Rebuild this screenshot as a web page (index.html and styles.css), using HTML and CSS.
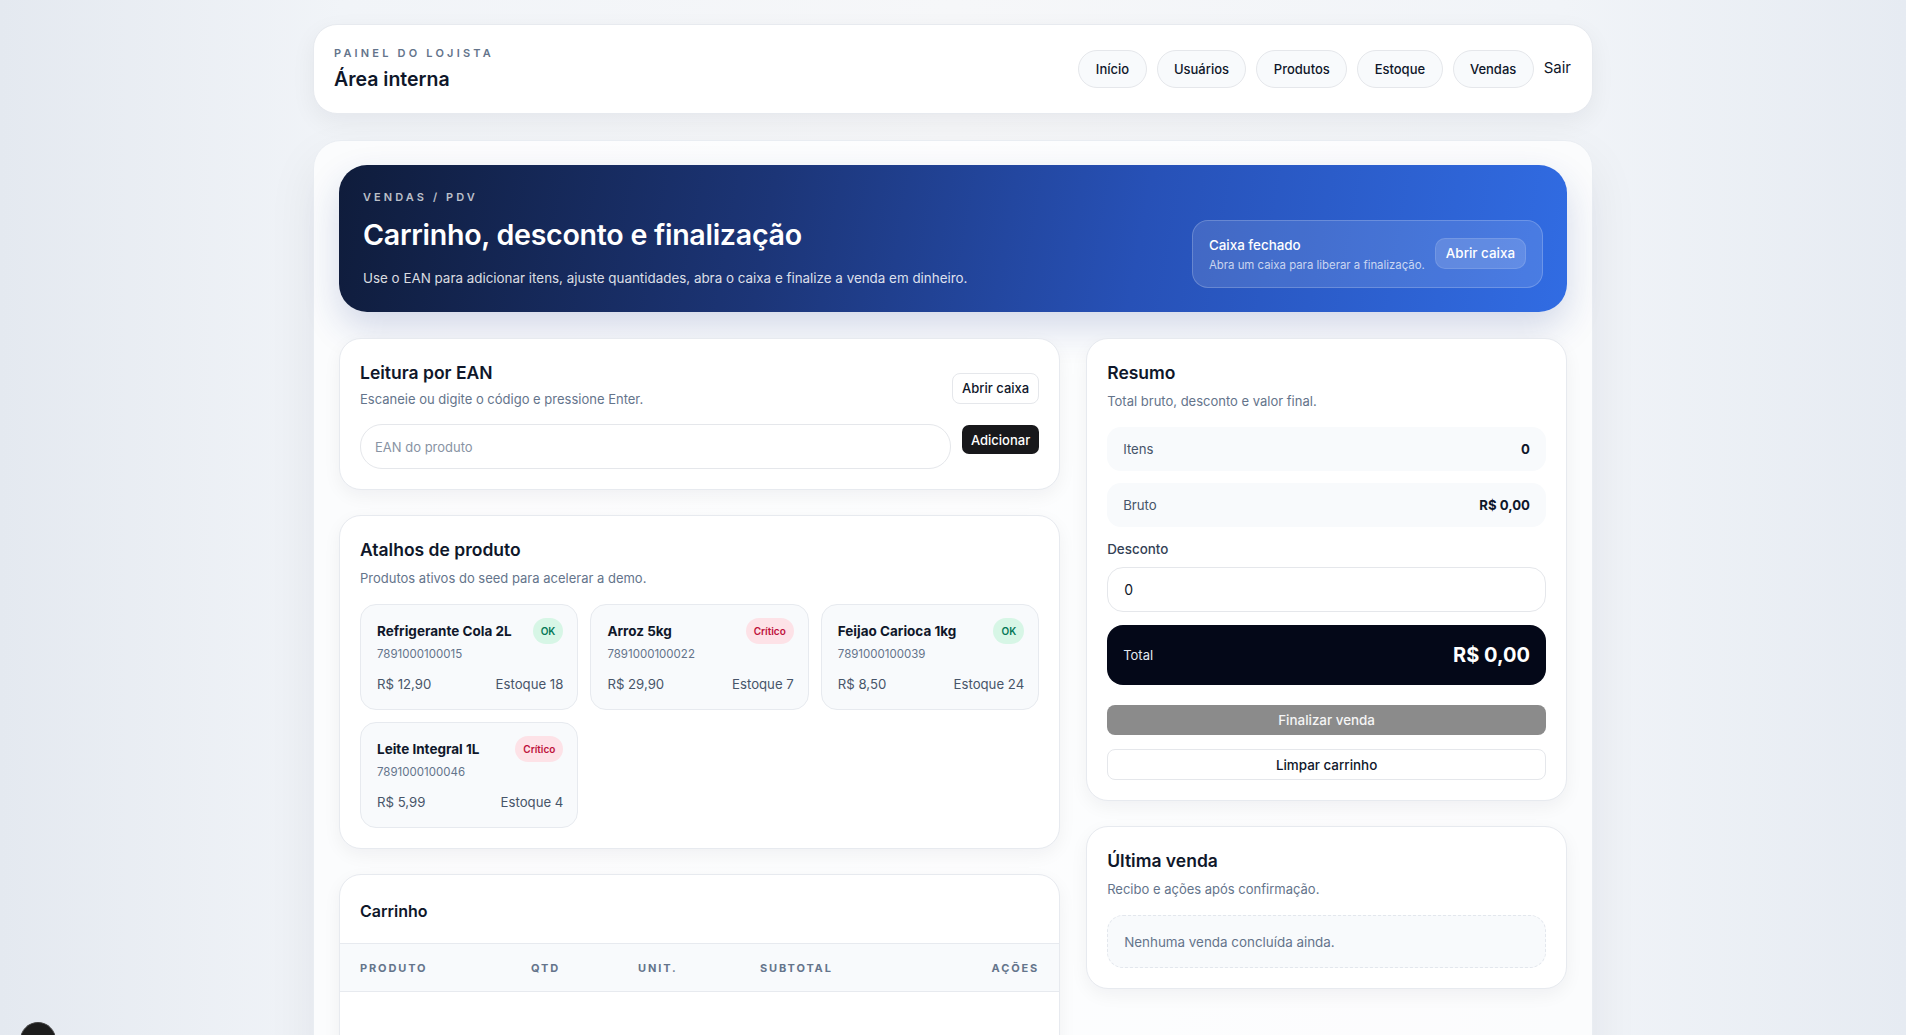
FILE: index.html
```html
<!DOCTYPE html>
<html lang="pt-BR">
<head>
    <meta charset="UTF-8">
    <meta name="viewport" content="width=device-width, initial-scale=1.0">
    <title>PDV - Painel do Lojista</title>
    <link rel="stylesheet" href="styles.css">
</head>
<body>
    <div class="page">
        <header class="topbar">
            <div class="brand">
                <span class="eyebrow">Painel do lojista</span>
                <h1 class="brand-title">Área interna</h1>
            </div>
            <nav class="nav">
                <a href="#" class="nav-pill">Início</a>
                <a href="#" class="nav-pill">Usuários</a>
                <a href="#" class="nav-pill">Produtos</a>
                <a href="#" class="nav-pill">Estoque</a>
                <a href="#" class="nav-pill">Vendas</a>
                <a href="#" class="nav-link">Sair</a>
            </nav>
        </header>

        <main class="panel">
            <section class="hero">
                <div class="hero-text">
                    <span class="hero-eyebrow">Vendas / PDV</span>
                    <h2 class="hero-title">Carrinho, desconto e finalização</h2>
                    <p class="hero-desc">Use o EAN para adicionar itens, ajuste quantidades, abra o caixa e finalize a venda em dinheiro.</p>
                </div>
                <div class="cash-box">
                    <div>
                        <div class="cash-title">Caixa fechado</div>
                        <div class="cash-sub">Abra um caixa para liberar a finalização.</div>
                    </div>
                    <button class="cash-btn">Abrir caixa</button>
                </div>
            </section>

            <div class="grid">
                <div class="col">
                    <section class="card">
                        <div class="card-head">
                            <div>
                                <h3 class="card-title">Leitura por EAN</h3>
                                <p class="card-sub">Escaneie ou digite o código e pressione Enter.</p>
                            </div>
                            <button class="btn-outline">Abrir caixa</button>
                        </div>
                        <div class="ean-row">
                            <input type="text" class="ean-input" placeholder="EAN do produto">
                            <button class="btn-dark">Adicionar</button>
                        </div>
                    </section>

                    <section class="card">
                        <h3 class="card-title">Atalhos de produto</h3>
                        <p class="card-sub sub-gap">Produtos ativos do seed para acelerar a demo.</p>
                        <div class="products">
                            <div class="product">
                                <div class="product-top">
                                    <span class="product-name">Refrigerante Cola 2L</span>
                                    <span class="badge badge-ok">OK</span>
                                </div>
                                <div class="product-ean">7891000100015</div>
                                <div class="product-foot">
                                    <span>R$ 12,90</span>
                                    <span>Estoque 18</span>
                                </div>
                            </div>
                            <div class="product">
                                <div class="product-top">
                                    <span class="product-name">Arroz 5kg</span>
                                    <span class="badge badge-crit">Crítico</span>
                                </div>
                                <div class="product-ean">7891000100022</div>
                                <div class="product-foot">
                                    <span>R$ 29,90</span>
                                    <span>Estoque 7</span>
                                </div>
                            </div>
                            <div class="product">
                                <div class="product-top">
                                    <span class="product-name">Feijao Carioca 1kg</span>
                                    <span class="badge badge-ok">OK</span>
                                </div>
                                <div class="product-ean">7891000100039</div>
                                <div class="product-foot">
                                    <span>R$ 8,50</span>
                                    <span>Estoque 24</span>
                                </div>
                            </div>
                            <div class="product">
                                <div class="product-top">
                                    <span class="product-name">Leite Integral 1L</span>
                                    <span class="badge badge-crit">Crítico</span>
                                </div>
                                <div class="product-ean">7891000100046</div>
                                <div class="product-foot">
                                    <span>R$ 5,99</span>
                                    <span>Estoque 4</span>
                                </div>
                            </div>
                        </div>
                    </section>

                    <section class="card card-table">
                        <h3 class="table-title">Carrinho</h3>
                        <div class="table-head">
                            <span>Produto</span>
                            <span>Qtd</span>
                            <span>Unit.</span>
                            <span>Subtotal</span>
                            <span class="right">Ações</span>
                        </div>
                        <div class="table-body"></div>
                    </section>
                </div>

                <div class="col">
                    <section class="card">
                        <h3 class="card-title">Resumo</h3>
                        <p class="card-sub sub-gap">Total bruto, desconto e valor final.</p>
                        <div class="sum-row">
                            <span>Itens</span>
                            <strong>0</strong>
                        </div>
                        <div class="sum-row">
                            <span>Bruto</span>
                            <strong>R$ 0,00</strong>
                        </div>
                        <label class="field-label">Desconto</label>
                        <input type="text" class="field-input" value="0">
                        <div class="total-box">
                            <span>Total</span>
                            <strong>R$ 0,00</strong>
                        </div>
                        <button class="btn-finish" disabled>Finalizar venda</button>
                        <button class="btn-clear">Limpar carrinho</button>
                    </section>

                    <section class="card">
                        <h3 class="card-title">Última venda</h3>
                        <p class="card-sub sub-gap">Recibo e ações após confirmação.</p>
                        <div class="empty-box">Nenhuma venda concluída ainda.</div>
                    </section>
                </div>
            </div>
        </main>
    </div>

    <button class="dev-dot" aria-label="dev"></button>
</body>
</html>
```

FILE: styles.css
```css
* {
    box-sizing: border-box;
}
body {
    margin: 0;
    font-family: Inter, "Noto Sans", sans-serif;
    color: #0f172a;
    background: linear-gradient(90deg, #e4e9f0 0%, #f1f4f8 18%, #f6f7f9 50%, #f1f4f8 82%, #e6ebf2 100%);
    min-height: 100vh;
}
.page {
    max-width: 1280px;
    margin: 0 auto;
    padding-top: 24px;
}
.topbar {
    display: flex;
    justify-content: space-between;
    align-items: center;
    background: #fff;
    border: 1px solid #e7eaef;
    border-radius: 24px;
    padding: 20px 20px 21px 20px;
    box-shadow: 0 8px 24px rgba(15, 23, 42, 0.06);
}
.eyebrow {
    display: block;
    font-size: 11px;
    line-height: 16px;
    font-weight: 600;
    letter-spacing: 0.29em;
    text-transform: uppercase;
    color: #64748b;
}
.brand-title {
    margin: 5px 0 0;
    font-size: 19.5px;
    line-height: 26px;
    font-weight: 600;
}
.nav {
    display: flex;
    align-items: center;
    gap: 10px;
}
.nav-pill {
    display: inline-flex;
    align-items: center;
    height: 38px;
    padding: 0 16.4px;
    border: 1px solid #e5e7eb;
    border-radius: 999px;
    background: #f8fafc;
    color: #0f172a;
    font-size: 13px;
    font-weight: 500;
    text-decoration: none;
}
.nav-link {
    color: #0f172a;
    font-size: 15px;
    text-decoration: none;
    padding-right: 1px;
    margin-bottom: 3px;
}

.panel {
    margin-top: 26px;
    background: rgba(255, 255, 255, 0.72);
    border: 1px solid #e9edf2;
    border-radius: 28px;
    padding: 24px 25px 40px;
    box-shadow: 0 20px 50px rgba(15, 23, 42, 0.07);
}
.hero {
    display: flex;
    justify-content: space-between;
    align-items: flex-end;
    padding: 25px 24px 24px;
    border-radius: 28px;
    background: linear-gradient(100deg, #0f1c3b 0%, #1c3577 35%, #2751b7 65%, #316ce3 100%);
    color: #fff;
    box-shadow: 0 16px 36px rgba(30, 58, 138, 0.18);
}
.hero-eyebrow {
    display: block;
    font-size: 11px;
    line-height: 14px;
    font-weight: 600;
    letter-spacing: 0.28em;
    text-transform: uppercase;
    color: rgba(255, 255, 255, 0.72);
}
.hero-title {
    margin: 12px 0 0;
    font-size: 28.6px;
    line-height: 38px;
    font-weight: 600;
    letter-spacing: -0.01em;
}
.hero-desc {
    margin: 14px 0 0;
    font-size: 13.4px;
    line-height: 20px;
    color: rgba(255, 255, 255, 0.86);
}
.cash-box {
    display: flex;
    align-items: center;
    gap: 10px;
    padding: 15px 16px 14px 16px;
    border-radius: 16px;
    background: rgba(255, 255, 255, 0.12);
    border: 1px solid rgba(255, 255, 255, 0.2);
}
.cash-title {
    font-size: 13.4px;
    line-height: 18px;
    font-weight: 500;
}
.cash-sub {
    margin-top: 4px;
    font-size: 11.4px;
    line-height: 15px;
    color: rgba(255, 255, 255, 0.72);
}
.cash-btn {
    height: 31px;
    padding: 0 10px;
    border-radius: 10px;
    border: 1px solid rgba(255, 255, 255, 0.12);
    background: rgba(255, 255, 255, 0.14);
    color: #fff;
    font-family: inherit;
    font-size: 13.4px;
    font-weight: 500;
    margin-bottom: 3px;
}

.grid {
    display: grid;
    grid-template-columns: 1.5fr 1fr;
    gap: 26px;
    margin-top: 26px;
}
.col {
    display: flex;
    flex-direction: column;
    gap: 25px;
}
.card {
    background: #fff;
    border: 1px solid #e7eaef;
    border-radius: 22px;
    padding: 22px 20px 20px;
    box-shadow: 0 6px 18px rgba(15, 23, 42, 0.05);
}
.card-head {
    display: flex;
    justify-content: space-between;
    align-items: center;
}
.card-title {
    margin: 0;
    font-size: 17.5px;
    line-height: 24px;
    font-weight: 600;
}
.card-sub {
    margin: 4px 0 0;
    font-size: 13px;
    line-height: 20px;
    color: #64748b;
}
.sub-gap {
    margin-top: 6px;
    margin-bottom: 16px;
}
.btn-outline {
    height: 31px;
    padding: 0 9px;
    border-radius: 8px;
    border: 1px solid #e5e7eb;
    background: #fff;
    color: #0f172a;
    font-family: inherit;
    font-size: 13px;
    font-weight: 500;
    margin-top: 6px;
}
.ean-row {
    display: flex;
    align-items: flex-start;
    gap: 11px;
    margin-top: 15px;
}
.ean-input {
    flex: 1;
    height: 45px;
    padding: 0 14px;
    border: 1px solid #e5e7eb;
    border-radius: 22px;
    font-family: inherit;
    font-size: 13px;
    color: #0f172a;
    outline: none;
}
.ean-input::placeholder {
    color: #8893a3;
}
.btn-dark {
    height: 29px;
    padding: 0 9px;
    border: none;
    border-radius: 7px;
    background: #18181b;
    color: #fff;
    font-family: inherit;
    font-size: 13px;
    font-weight: 500;
    margin-top: 1px;
}

.products {
    display: grid;
    grid-template-columns: repeat(3, 1fr);
    gap: 12px;
}
.product {
    background: #f8fafc;
    border: 1px solid #e7eaef;
    border-radius: 16px;
    padding: 17px 14px 15px 16px;
}
.product-top {
    display: flex;
    justify-content: space-between;
    align-items: center;
    height: 18px;
}
.product-name {
    font-size: 13.5px;
    font-weight: 700;
    line-height: 18px;
}
.badge {
    font-size: 10px;
    font-weight: 600;
    line-height: 16px;
    padding: 5px 8px;
    border-radius: 999px;
}
.badge-ok {
    background: #d7f6e6;
    color: #047857;
}
.badge-crit {
    background: #fde2e7;
    color: #be123c;
}
.product-ean {
    margin-top: 6px;
    font-size: 11.5px;
    line-height: 16px;
    color: #64748b;
}
.product-foot {
    display: flex;
    justify-content: space-between;
    margin-top: 12px;
    font-size: 13.2px;
    line-height: 20px;
    color: #475569;
}

.card-table {
    padding: 0;
    overflow: hidden;
}
.table-title {
    margin: 0;
    padding: 25px 20px 21px;
    font-size: 16px;
    line-height: 22px;
    font-weight: 600;
}
.table-head {
    display: grid;
    grid-template-columns: 171px 107px 122px 1fr auto;
    align-items: center;
    height: 49px;
    padding: 0 20px;
    background: #f8fafc;
    border-top: 1px solid #e7eaef;
    border-bottom: 1px solid #e7eaef;
    font-size: 11px;
    font-weight: 700;
    letter-spacing: 0.17em;
    text-transform: uppercase;
    color: #64748b;
}
.table-head .right {
    text-align: right;
}
.table-body {
    height: 80px;
}

.sum-row {
    display: flex;
    justify-content: space-between;
    align-items: center;
    height: 44px;
    padding: 0 16px;
    margin-bottom: 12px;
    border-radius: 14px;
    background: #f8fafc;
    font-size: 13.2px;
    color: #475569;
}
.sum-row strong {
    color: #0f172a;
    font-weight: 700;
}
.field-label {
    display: block;
    font-size: 13.4px;
    line-height: 20px;
    font-weight: 500;
    color: #334155;
    margin-top: 1px;
}
.field-input {
    display: block;
    width: 100%;
    height: 45px;
    margin-top: 8px;
    padding: 0 16px;
    border: 1px solid #e5e7eb;
    border-radius: 16px;
    font-family: inherit;
    font-size: 14px;
    color: #0f172a;
    outline: none;
}
.total-box {
    display: flex;
    justify-content: space-between;
    align-items: center;
    height: 60px;
    margin-top: 13px;
    padding: 0 16px;
    border-radius: 16px;
    background: #040818;
    color: #fff;
}
.total-box span {
    font-size: 13px;
    color: #e2e8f0;
}
.total-box strong {
    font-size: 20px;
    font-weight: 700;
}
.btn-finish {
    display: block;
    width: 100%;
    height: 30px;
    margin-top: 20px;
    border: none;
    border-radius: 8px;
    background: #8b8b8b;
    color: #f5f5f5;
    font-family: inherit;
    font-size: 13.4px;
    font-weight: 500;
}
.btn-clear {
    display: block;
    width: 100%;
    height: 31px;
    margin-top: 14px;
    border: 1px solid #e5e7eb;
    border-radius: 8px;
    background: #fff;
    color: #0f172a;
    font-family: inherit;
    font-size: 13.4px;
    font-weight: 500;
}
.empty-box {
    display: flex;
    align-items: center;
    height: 53px;
    padding: 0 16px;
    border: 1px dashed #e3e7ed;
    border-radius: 16px;
    background: #f8fafc;
    font-size: 13.4px;
    color: #64748b;
}

.dev-dot {
    position: fixed;
    left: 20px;
    bottom: -23px;
    width: 36px;
    height: 36px;
    border-radius: 50%;
    border: 1px solid #444;
    background: #1c1c1c;
    padding: 0;
}
```
